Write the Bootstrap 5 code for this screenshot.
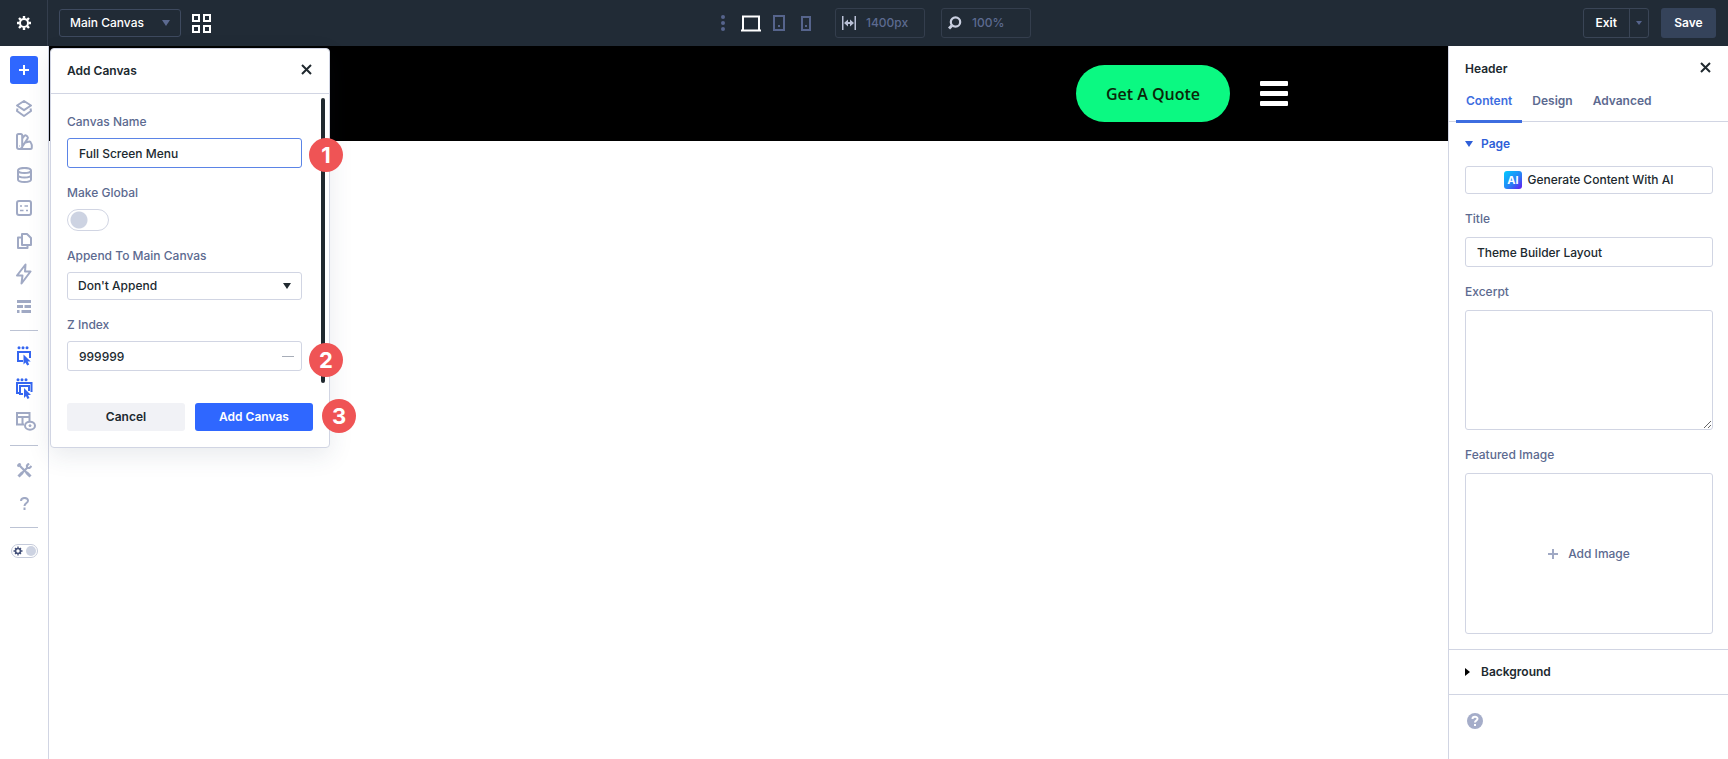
<!DOCTYPE html>
<html lang="en">
<head>
<meta charset="utf-8">
<meta name="viewport" content="width=device-width, initial-scale=1">
<title>Main Canvas</title>
<link href="https://cdn.jsdelivr.net/npm/bootstrap@5.3.0/dist/css/bootstrap.min.css" rel="stylesheet">
<style>
:root{--ink:#20292f;--muted-ink:#5c6a90;--edge:#d1d5e3;--accent:#2f67ff;--bar:#212b36;--icon:#a0a9c4}
body{font-family:Inter,"Liberation Sans",sans-serif;font-size:12px;font-weight:500;line-height:18px;color:var(--ink);background:#fff}
svg{display:block;flex:none}
button,.form-control,.form-select{font:inherit;line-height:18px}
.plain{border:0;background:none;padding:0;color:inherit}

/* top bar */
.topbar{height:46px;background:var(--bar);color:#fff;flex:none}
.topbar-side{flex:1 1 0}
.gear{width:48px;height:46px;border-right:1px solid #343e4d;display:grid;place-items:center}
.form-select.canvas-pick{width:122px;height:28px;margin-left:11px;margin-right:11px;padding:0 10px;border:1px solid #3e4a5f;background-color:transparent;color:#fff;
 background-image:url("data:image/svg+xml,%3Csvg xmlns='http://www.w3.org/2000/svg' viewBox='0 0 8 6'%3E%3Cpath d='M0 0h8L4 6z' fill='%235c6a90'/%3E%3C/svg%3E")}
.field-dark{width:90px;height:30px;border:1px solid #343e4d;border-radius:3px;padding:0 6px;gap:10px}
.field-dark input{width:52px;border:0;background:none;color:#5c6a90;padding:0;outline:0;font:inherit;min-width:0}
.exit-group{height:30px;border:1px solid #3a4556;border-radius:3px}
.exit-group button{padding:0 12px}
.exit-group button+button{border-left:1px solid #3a4556;width:19px;display:grid;place-items:center;padding:0}
.save-btn{height:30px;width:55px;border:0;border-radius:3px;background:#35435a;color:#fff;font-weight:600;margin:0 12px}

/* tool rail */
.rail{width:49px;border-right:1px solid var(--edge);padding-top:10px;flex:none;color:var(--icon)}
.add-btn{width:28px;height:28px;border:0;border-radius:3px;background:var(--accent);display:grid;place-items:center;padding:0;margin-bottom:8px}
.tool{height:33px;width:100%;display:grid;place-items:center}
.tool.on{color:#3566f0}
.rail hr{width:28px;margin:7px 0 8px;border-color:#bcc3d4;opacity:1}
.mode{width:27px;height:14px;border:1px solid #c5cbdb;border-radius:7px;padding:0 1px;margin-top:8px}
.mode span{width:10px;height:10px;border-radius:50%;background:#cdd3e2}

/* page being edited */
.site-head{background:#000;height:95px;padding-right:160px;gap:30px}
.quote-btn{background:#0bf982;color:#0a2608;border:0;border-radius:29px;height:57px;padding:0 30px;font-family:"Open Sans",sans-serif;font-size:16px;font-weight:600}
.burger{width:28px;gap:5px}
.burger span{height:5px;background:#fff;border-radius:1px}

/* dialog */
.dialog-box{position:absolute;left:1px;top:2px;width:280px;background:#fff;border:1px solid var(--edge);border-radius:4px;box-shadow:0 8px 24px rgba(43,60,90,.1)}
.dialog-head{height:45px;padding:0 17px 0 16px;border-bottom:1px solid var(--edge);font-weight:600}
.dialog-body{position:relative;padding:19px 27px 0 16px;height:301px}
.thumb{position:absolute;right:4px;top:4px;width:4px;height:285px;border-radius:2px;background:var(--ink)}
.step{position:absolute;width:34px;height:34px;border-radius:50%;background:#ef5455;color:#fff;font-size:22px;line-height:34px;font-weight:700;text-align:center}
.step-side{right:-14px}
.step-out{right:-27px;top:4px}
.lbl{display:block;color:var(--muted-ink);margin-bottom:7px}
.form-control,.form-select{border-color:var(--edge);border-radius:3px;color:var(--ink);padding:0 11px;box-shadow:none}
.form-control{height:30px}
.form-select{height:28px;padding:0 10px;background-image:url("data:image/svg+xml,%3Csvg xmlns='http://www.w3.org/2000/svg' viewBox='0 0 8 6'%3E%3Cpath d='M0 0h8L4 6z' fill='%2320292f'/%3E%3C/svg%3E");background-size:8px 6px;background-position:right 10px center}
.form-control.hot{border-color:#5b84e6}
.unit-dash{position:absolute;right:8px;top:15px;width:12px;height:1px;background:#a7adb8}
.global-switch{appearance:none;display:block;width:42px;height:22px;margin:0;border:1px solid var(--edge);border-radius:11px;background:radial-gradient(circle at 11px 10px,#cdd3e2 8px,transparent 9px) #fff}
.acts{gap:10px}
.act{flex:1;height:28px;border:0;border-radius:3px;background:#f1f2f6;color:var(--ink);font-weight:600}
.act.go{background:var(--accent);color:#fff}

/* settings panel */
.panel{width:280px;border-left:1px solid var(--edge);flex:none}
.panel-head{padding:14px 17px 0 16px;font-weight:600}
.tabs{padding:0 7px;border-bottom:1px solid var(--edge);height:41px;margin-top:3px}
.tabs a{padding:11px 10px 0;height:42px;color:var(--muted-ink);text-decoration:none;font-weight:600}
.tabs a.on{color:#3d6de0;border-bottom:3px solid #3d6de0}
.panel-body{padding:13px 15px 0 16px}
.panel-body .lbl{margin:16px 0 9px}
.panel-body textarea{height:120px}
.section-title{color:#2f5fd8;font-weight:600;gap:8px;margin-bottom:13px}
.ai-btn{height:28px;border:1px solid var(--edge);border-radius:3px;background:#fff;color:var(--ink);gap:5px}
.drop{height:161px;border:1px solid var(--edge);border-radius:3px;background:#fff;color:var(--muted-ink);gap:10px}
.closed{height:46px;border:solid var(--edge);border-width:1px 0;padding:0 16px;font-weight:600;gap:11px;margin-top:15px}
.help-btn{margin:18px}
</style>
</head>
<body>
<div class="d-flex flex-column min-vh-100">
<header class="topbar d-flex align-items-center">
  <div class="topbar-side d-flex align-items-center">
    <button class="plain gear" aria-label="Settings"><svg width="14" height="14" viewBox="0 0 14 14" fill="none" stroke="#fff"><circle cx="7" cy="7" r="4" stroke-width="2"/><path stroke-width="2.400" d="M7 0v2.500M7 11.500V14M0 7h2.500M11.500 7H14M2 2l1.800 1.800M10.200 10.200L12 12M12 2l-1.800 1.800M3.800 10.200L2 12"/></svg></button>
    <select class="form-select canvas-pick" aria-label="Canvas"><option>Main Canvas</option></select>
    <button class="plain" aria-label="Canvas grid"><svg width="19" height="19" viewBox="0 0 19 19" fill="none" stroke="#fff" stroke-width="2"><path d="M1 1h6v6H1zM12 1h6v6h-6zM1 12h6v6H1zM12 12h6v6h-6z"/></svg></button>
  </div>
  <div class="d-flex align-items-center ps-4">
    <button class="plain me-3" aria-label="More"><svg width="4" height="16" viewBox="0 0 4 16" fill="#56648c"><circle cx="2" cy="2" r="2"/><circle cx="2" cy="8" r="2"/><circle cx="2" cy="14" r="2"/></svg></button>
    <button class="plain me-2" aria-label="Desktop"><svg width="20" height="17" viewBox="0 0 20 17" fill="none" stroke="#fff" stroke-width="2"><path d="M2 15V1.500h16V15M0 15.500h20"/></svg></button>
    <button class="plain ms-1 me-3" aria-label="Tablet"><svg width="12" height="16" viewBox="0 0 12 16"><path fill="none" stroke="#56648c" stroke-width="2" d="M1 1h10v14H1z"/><path fill="#56648c" d="M5 10h2v2H5z"/></svg></button>
    <button class="plain me-3" aria-label="Phone"><svg width="10" height="15" viewBox="0 0 10 15"><path fill="none" stroke="#56648c" stroke-width="2" d="M1 1h8v13H1z"/><path fill="#56648c" d="M4 9h2v2H4z"/></svg></button>
    <label class="field-dark d-flex align-items-center ms-2"><svg width="14" height="14" viewBox="0 0 14 14" fill="#b9c0d6"><path d="M0 0h1.500v14H0zM12.500 0H14v14h-1.500zM2 7l4-3.500V6h2V3.500L12 7l-4 3.500V8H6v2.500z"/></svg><input value="1400px" aria-label="Width"></label>
    <label class="field-dark d-flex align-items-center ms-3"><svg width="14" height="14" viewBox="0 0 14 14" fill="none" stroke="#c9cfe0" stroke-width="2.200"><circle cx="7.500" cy="6" r="4.700"/><path stroke-width="3" d="M4 9.500L1 12.500"/></svg><input value="100%" aria-label="Zoom"></label>
  </div>
  <div class="topbar-side d-flex justify-content-end">
    <div class="exit-group d-flex"><button class="plain text-white fw-semibold">Exit</button><button class="plain" aria-label="Exit options"><svg width="6" height="4" viewBox="0 0 6 4" fill="#56648c"><path d="M0 0h6L3 4z"/></svg></button></div>
    <button class="save-btn">Save</button>
  </div>
</header>

<div class="d-flex flex-grow-1">
  <nav class="rail d-flex flex-column align-items-center" aria-label="Tools">
    <button class="add-btn" aria-label="Add"><svg width="10" height="10" viewBox="0 0 10 10" stroke="#fff" stroke-width="2"><path d="M5 0v10M0 5h10"/></svg></button>
    <button class="plain tool" aria-label="Layers"><svg width="16" height="17" viewBox="0 0 16 17" fill="none" stroke="currentColor" stroke-width="2" stroke-linejoin="round"><path d="M8 1l7 4.500-7 4.700-7-4.700zM1.500 8.500L1 11l7 5 7-5-.5-2.500"/></svg></button>
    <button class="plain tool" aria-label="Styles"><svg width="17" height="17" viewBox="0 0 17 17" fill="none" stroke="currentColor" stroke-width="2" stroke-linejoin="round"><path d="M2.500 1h2.200q1.500 0 1.500 1.500V14q0 2-2 2H3q-2 0-2-2V2.500Q1 1 2.500 1zM6.200 5.500l2.300-2.800q.9-.9 1.900 0l1 .9q.9.900.2 2L5 15.500M9.500 9.500l4-.9q1 0 1.300.9l1 2.500v2.500q0 1.500-1.500 1.500H4"/><path stroke-width="1" d="M3.600 12.500v1"/></svg></button>
    <button class="plain tool" aria-label="Data"><svg width="15" height="16" viewBox="0 0 15 16" fill="none" stroke="currentColor" stroke-width="2"><ellipse cx="7.500" cy="3.500" rx="6.500" ry="2.600"/><path d="M1 3.500v9c0 3.300 13 3.300 13 0v-9M1 8c0 3.300 13 3.300 13 0"/></svg></button>
    <button class="plain tool" aria-label="Variables"><svg width="16" height="16" viewBox="0 0 16 16" fill="none" stroke="currentColor" stroke-width="2"><rect x="1" y="1" width="14" height="14" rx="2"/><path stroke-width="1.500" d="M4 6h2M8.500 6H12M4 10.500h3.500M10 10.500h2"/></svg></button>
    <button class="plain tool" aria-label="Pages"><svg width="15" height="16" viewBox="0 0 15 16" fill="none" stroke="currentColor" stroke-width="2" stroke-linejoin="round"><path d="M5 1h5l4 4v7H5zM4.500 4.500H1V15h9.500v-3"/></svg></button>
    <button class="plain tool" aria-label="Interactions"><svg width="16" height="22" viewBox="0 0 16 22" fill="none" stroke="currentColor" stroke-width="2" stroke-linejoin="round"><path d="M9.500 1.500L1 12.500h5.500L5.500 20.500l9-12H9z"/></svg></button>
    <button class="plain tool" aria-label="Wireframe"><svg width="14" height="13" viewBox="0 0 14 13" fill="currentColor"><path d="M0 0h14v3H0zM0 5h6v3H0zM7.500 5H14v3H7.500zM0 10h2.500v3H0zM4.500 10H14v3H4.500z"/></svg></button>
    <hr>
    <button class="plain tool on" aria-label="Select"><svg width="15" height="20" viewBox="0 0 15 20" fill="currentColor"><circle cx="2" cy="1.700" r="1.500"/><circle cx="6" cy="1.700" r="1.500"/><circle cx="10" cy="1.700" r="1.500"/><path fill="none" stroke="currentColor" stroke-width="2" d="M6 15H1V6h12v6"/><path d="M6.500 8.500v10l2-2 1.700 3 2-1-1.500-3h3z"/></svg></button>
    <button class="plain tool on" aria-label="Multi select"><svg width="17" height="21" viewBox="0 0 17 21" fill="currentColor"><circle cx="2" cy="1.700" r="1.500"/><circle cx="6" cy="1.700" r="1.500"/><circle cx="10" cy="1.700" r="1.500"/><path fill="none" stroke="currentColor" stroke-width="2" d="M3 15H1V5h14.500v9M7 16H4V8h9v5"/><path d="M8 10v10l2-2 1.500 3 2-1-1.500-3h3z"/></svg></button>
    <button class="plain tool" aria-label="Preview layout"><svg class="ms-1" width="20" height="19" viewBox="0 0 20 19" fill="none" stroke="currentColor" stroke-width="2"><path d="M8 12.500H1V1h12.500v8M1 5h12.500M6.500 5v7.500"/><ellipse cx="14" cy="13.700" rx="5" ry="4"/><circle cx="14" cy="13.700" r="1" fill="currentColor" stroke-width="1"/></svg></button>
    <hr>
    <button class="plain tool" aria-label="Tools"><svg width="15" height="15" viewBox="0 0 15 15" fill="none" stroke="currentColor" stroke-width="2.200"><path d="M1 1l4 4M3.500 3.500l9 9"/><path stroke-width="3" d="M9.500 9.500l4 4M1.500 13.500l4-4"/><path d="M4 11l6.500-6.500M12 .5l-2 2V5h2.500l2-2M.5 3.500l3-3"/></svg></button>
    <button class="plain tool" aria-label="Help"><svg width="9" height="13" viewBox="0 0 9 13" fill="none" stroke="currentColor" stroke-width="2"><path d="M1 4c0-4 7-4 7-.3C8 6 4.500 6 4.500 9M4.500 10.500V13"/></svg></button>
    <hr>
    <button class="plain mode d-flex align-items-center justify-content-between" aria-label="Colour mode"><svg width="10" height="10" viewBox="0 0 10 10" fill="none" stroke="#44517a"><circle cx="5" cy="5" r="2.500" stroke-width="1.600"/><path stroke-width="1.300" d="M5 .5V3M5 7v2.500M.5 5H3M7 5h2.500M2 2l1.500 1.500M6.500 6.500L8 8M8 2L6.500 3.500M3.500 6.500L2 8"/></svg><span></span></button>
  </nav>

  <main class="flex-grow-1 position-relative">
    <div class="site-head d-flex align-items-center justify-content-end">
      <button class="quote-btn">Get A Quote</button>
      <button class="plain burger d-flex flex-column" aria-label="Menu"><span></span><span></span><span></span></button>
    </div>

    <section class="dialog-box" role="dialog" aria-label="Add Canvas">
      <div class="dialog-head d-flex align-items-center justify-content-between"><span>Add Canvas</span><button class="plain pb-1" aria-label="Close"><svg width="11" height="11" viewBox="0 0 11 11" stroke="#20292f" stroke-width="2"><path d="M1 1l9 9M10 1l-9 9"/></svg></button></div>
      <div class="dialog-body">
        <div class="thumb"></div>
        <label class="lbl" for="cname">Canvas Name</label>
        <input class="form-control hot mb-3" id="cname" value="Full Screen Menu">
        <label class="lbl" for="global">Make Global</label>
        <input class="global-switch mb-3" type="checkbox" role="switch" id="global">
        <label class="lbl" for="append">Append To Main Canvas</label>
        <select class="form-select mb-3" id="append"><option>Don't Append</option></select>
        <label class="lbl" for="zi">Z Index</label>
        <div class="position-relative"><input class="form-control" id="zi" value="999999"><span class="unit-dash"></span></div>
        <span class="step step-side" style="top:44px">1</span>
        <span class="step step-side" style="top:249px">2</span>
      </div>
      <div class="acts d-flex position-relative px-3 pb-3 pt-2">
        <button class="act">Cancel</button><button class="act go">Add Canvas</button>
        <span class="step step-out">3</span>
      </div>
    </section>
  </main>

  <aside class="panel">
    <div class="panel-head d-flex justify-content-between"><span>Header</span><button class="plain" aria-label="Close panel"><svg class="mb-1" width="11" height="11" viewBox="0 0 11 11" stroke="#20292f" stroke-width="2"><path d="M1 1l9 9M10 1l-9 9"/></svg></button></div>
    <nav class="tabs d-flex"><a class="on" href="#content">Content</a><a href="#design">Design</a><a href="#advanced">Advanced</a></nav>
    <div class="panel-body">
      <button class="plain section-title d-flex align-items-center"><svg width="8" height="6" viewBox="0 0 8 6" fill="currentColor"><path d="M0 0h8L4 6z"/></svg>Page</button>
      <button class="ai-btn w-100 d-flex align-items-center justify-content-center"><svg width="18" height="18" viewBox="0 0 18 18"><defs><linearGradient id="g" x1="0" y1="0" x2="1" y2="1"><stop offset="0" stop-color="#0cf"/><stop offset=".55" stop-color="#2684f5"/><stop offset="1" stop-color="#6417f0"/></linearGradient></defs><rect width="18" height="18" rx="3" fill="url(#g)"/><text x="9" y="13" text-anchor="middle" font-size="11" font-weight="700" fill="#fff">AI</text></svg>Generate Content With AI</button>
      <label class="lbl" for="title">Title</label>
      <input class="form-control" id="title" value="Theme Builder Layout">
      <label class="lbl" for="excerpt">Excerpt</label>
      <textarea class="form-control d-block" id="excerpt"></textarea>
      <span class="lbl">Featured Image</span>
      <button class="drop w-100 d-flex align-items-center justify-content-center"><svg width="10" height="10" viewBox="0 0 10 10" stroke="#a0a9c4" stroke-width="2"><path d="M5 0v10M0 5h10"/></svg>Add Image</button>
    </div>
    <button class="plain closed w-100 d-flex align-items-center"><svg width="5" height="8" viewBox="0 0 5 8"><path d="M0 0l5 4-5 4z"/></svg>Background</button>
    <button class="plain help-btn" aria-label="Help"><svg width="16" height="16" viewBox="0 0 16 16"><circle cx="8" cy="8" r="8" fill="#a5adc9"/><path d="M5.500 6c0-3 5-3 5-.2C10.500 7.500 8 7.500 8 9.500M8 11v2" fill="none" stroke="#fff" stroke-width="2"/></svg></button>
  </aside>
</div>
</div>
<script src="https://cdn.jsdelivr.net/npm/bootstrap@5.3.0/dist/js/bootstrap.bundle.min.js"></script>
</body>
</html>
